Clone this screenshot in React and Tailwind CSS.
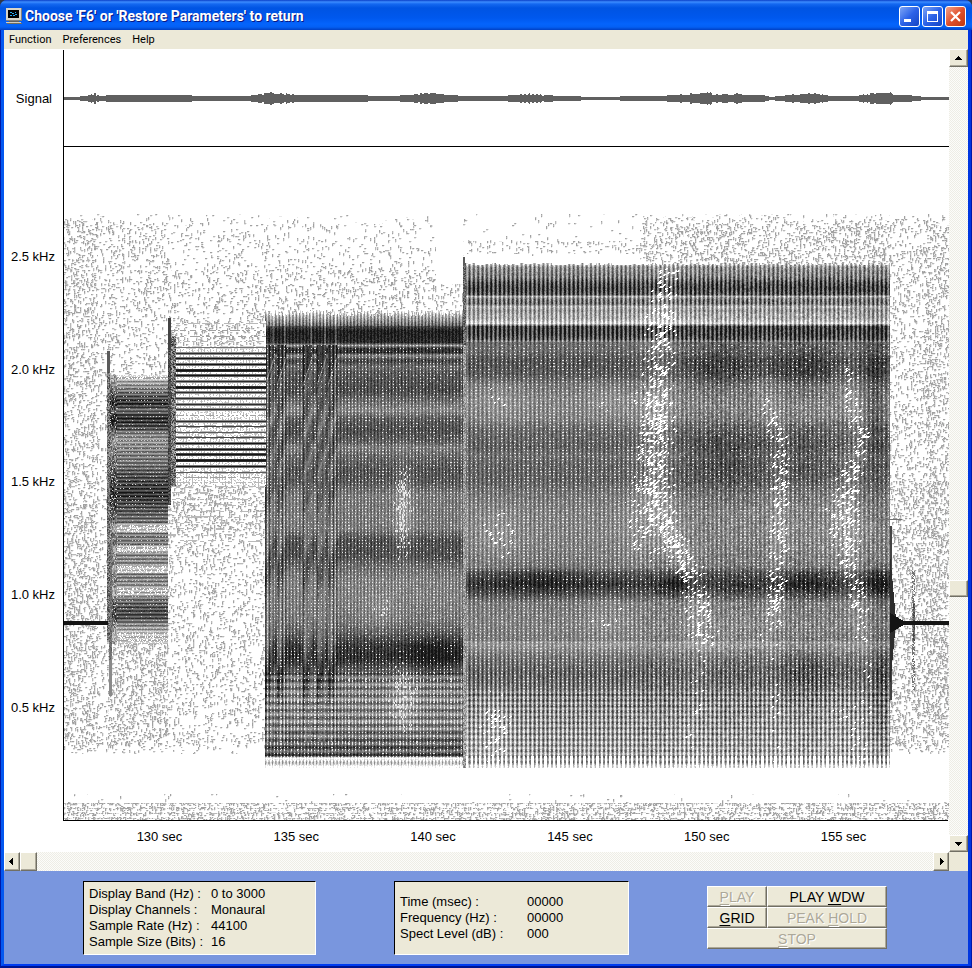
import React, { useMemo, useState } from "react"
import clsx from "clsx"

const frequencies = ["2.5 kHz", "2.0 kHz", "1.5 kHz", "1.0 kHz", "0.5 kHz"]
const times = ["130 sec", "135 sec", "140 sec", "145 sec", "150 sec", "155 sec"]

const displayInfo = [
  ["Display Band (Hz) :", "0 to 3000"],
  ["Display Channels :", "Monaural"],
  ["Sample Rate (Hz) :", "44100"],
  ["Sample Size (Bits) :", "16"],
]

const cursorInfo = [
  ["Time (msec) :", "00000"],
  ["Frequency (Hz) :", "00000"],
  ["Spect Level (dB) :", "000"],
]

const TOP = 50
const LEFT = 63
const RIGHT = 949

// half height of the signal, by x
const signal = [
  [64, 1], [74, 1], [85, 2], [94, 4], [100, 2], [111, 3], [128, 3], [188, 3], [194, 2],
  [245, 2], [256, 3], [270, 5], [285, 4], [295, 3], [345, 3], [390, 2], [410, 3],
  [430, 5], [445, 3], [470, 2], [500, 2], [530, 4], [560, 2], [600, 1], [640, 2], [655, 2],
  [700, 4], [710, 6], [713, 3], [735, 4], [745, 3], [762, 3], [770, 1], [790, 3],
  [805, 4], [818, 4], [830, 2], [855, 2], [868, 4], [890, 6], [893, 3], [908, 3], [915, 2],
  [925, 1], [948, 1],
]

// darkness of each block, by y
const chord = [
  [374, 0.1], [380, 0.4], [392, 0.65], [400, 0.85], [404, 0.9], [410, 0.65], [417, 0.92],
  [428, 0.78], [433, 0.58], [441, 0.5], [447, 0.55], [465, 0.64], [475, 0.78], [495, 0.9],
  [505, 0.78], [522, 0.64], [526, 0.2], [530, 0.15], [533, 0.6], [544, 0.6], [547, 0.15],
  [550, 0.2], [553, 0.55], [564, 0.55], [568, 0.12], [571, 0.15], [574, 0.6], [586, 0.5],
  [589, 0.15], [593, 0.2], [597, 0.6], [606, 0.75], [616, 0.8], [626, 0.5], [634, 0.3], [644, 0.1],
]
const tones = [
  [323, 0.3], [330, 0.35], [336, 0.4], [341, 0.3], [347, 0.6], [353, 0.9], [358, 0.95],
  [364, 0.95], [370, 1.3], [375, 1.1], [381, 0.9], [387, 1.3], [392, 0.9], [398, 0.9],
  [404, 0.9], [409, 0.85], [415, 0.35], [421, 0.9], [426, 0.8], [432, 0.7], [437, 0.75],
  [443, 1], [449, 1.1], [454, 1.2], [460, 1.3], [466, 0.95], [472, 0.7], [477, 0.4], [482, 0.3],
]
const warble = [
  [309, 0.1], [314, 0.4], [322, 0.65], [331, 0.96], [342, 0.9], [345, 0.45], [348, 0.85],
  [352, 0.88], [355, 0.5], [360, 0.8], [366, 0.62], [372, 0.7], [380, 0.73], [390, 0.76],
  [402, 0.6], [410, 0.5], [418, 0.68], [430, 0.75], [441, 0.68], [447, 0.54], [456, 0.64],
  [470, 0.72], [482, 0.7], [494, 0.56], [510, 0.56], [528, 0.56], [540, 0.74], [556, 0.74],
  [566, 0.62], [580, 0.53], [600, 0.53], [620, 0.57], [632, 0.67], [645, 0.84], [658, 0.88],
  [668, 0.72], [682, 0.56], [700, 0.52], [722, 0.52], [738, 0.62], [744, 0.68], [755, 0.72],
  [758, 0.25], [764, 0.4], [768, 0.05],
]
const sweep = [
  [264, 0.5], [267, 0.7], [275, 0.78], [282, 1], [288, 1.08], [294, 1], [296, 0.55],
  [299, 0.85], [303, 0.9], [306, 0.55], [310, 0.68], [314, 0.6], [318, 0.6], [323, 0.4],
  [326, 1.08], [334, 1.08], [339, 0.98], [342, 0.62], [350, 0.62], [360, 0.72], [374, 0.7],
  [384, 0.57], [400, 0.5], [418, 0.52], [428, 0.62], [446, 0.67], [456, 0.6], [464, 0.65],
  [480, 0.66], [492, 0.58], [510, 0.52], [530, 0.51], [550, 0.53], [567, 0.57],
  [572, 0.72], [584, 0.85], [594, 0.72], [602, 0.55], [625, 0.52], [645, 0.56],
  [656, 0.72], [672, 0.85], [684, 0.84], [696, 0.8], [712, 0.74], [735, 0.7], [756, 0.64],
  [764, 0.55], [768, 0.05],
]

// faded streaks running down through the sweep block: points of [y, x], then width and depth
const streaks = [
  { path: [[290, 662], [400, 659], [500, 657], [545, 675], [590, 697], [650, 700], [740, 692]], width: 15, depth: 0.34 },
  { path: [[390, 765], [440, 780], [550, 779], [640, 772], [700, 775]], width: 10, depth: 0.3 },
  { path: [[370, 848], [390, 851], [440, 861], [500, 846], [560, 850], [620, 860], [680, 870], [730, 862]], width: 11, depth: 0.3 },
]
const glows = [
  [403, 510, 9, 48, 0.35], [403, 700, 14, 34, 0.3], [380, 610, 18, 22, 0.14],
  [500, 400, 26, 26, 0.14], [498, 535, 22, 26, 0.2], [495, 730, 18, 40, 0.28],
  [610, 400, 24, 22, 0.12], [608, 620, 28, 26, 0.15], [645, 520, 26, 50, 0.2],
  [725, 630, 38, 20, 0.12], [838, 520, 24, 45, 0.18], [668, 275, 12, 25, 0.2],
  [650, 435, 14, 70, 0.16], [840, 720, 20, 40, 0.14],
]
const shadows = [
  [720, 365, 30, 30, 0.1], [805, 365, 28, 28, 0.12], [725, 455, 38, 34, 0.12],
  [800, 455, 30, 28, 0.08], [875, 400, 12, 80, 0.16], [675, 583, 12, 12, 0.16],
  [432, 655, 28, 20, 0.12], [540, 580, 36, 14, 0.1], [805, 670, 24, 24, 0.1],
  [880, 680, 10, 80, 0.14], [805, 583, 24, 14, 0.1], [880, 583, 14, 14, 0.14],
]

// columns where the warble jumps in pitch
const jumps = [265, 277, 303, 317, 328]

function at(points, v) {
  if (v <= points[0][0]) return points[0][1]
  for (let i = 1; i < points.length; i++) {
    const [b, fb] = points[i]
    if (v <= b) {
      const [a, fa] = points[i - 1]
      return fa + ((fb - fa) * (v - a)) / (b - a)
    }
  }
  return points[points.length - 1][1]
}

function noise(x, y) {
  let h = Math.imul(x, 374761393) + Math.imul(y, 668265263)
  h = Math.imul(h ^ (h >>> 13), 1274126177)
  h = Math.imul(h ^ (h >>> 15), 2246822519)
  return ((h ^ (h >>> 16)) >>> 0) / 4294967296
}

const blob = (x, y, [cx, cy, rx, ry, depth]) =>
  depth * Math.exp(-(((x - cx) / rx) ** 2) - ((y - cy) / ry) ** 2)

// how many specks the background holds at a point
function dust(x, y) {
  if (y >= 803) return y % 5 === 1 ? 0.12 : y % 5 === 3 ? 0.6 : 0.26
  if (y > 793) return 0.01
  if (y < 214 || y > 753) return 0
  const edge = Math.min(1, (y - 212) / 14, (755 - y) / 14)
  if (x < 98) return edge * (y > 500 ? 0.29 : 0.23)
  if (x < 108) return edge * 0.11
  if (x < 168) return edge * (y < 380 ? 0.13 : 0.29)
  if (x < 265) return edge * (y < 270 ? 0.07 : y < 320 ? 0.14 : y < 345 ? 0.22 : y > 480 && y < 530 ? 0.22 : 0.15)
  if (x < 436) return edge * (y < 270 ? 0.07 : 0.14)
  if (x < 463) return y > 283 ? 0.12 : 0
  if (x < 640) return y > 240 && y < 254 ? 0.1 : y < 256 ? 0.02 : 0
  if (x < 890) return edge * (0.19 + blob(x, y, [705, 232, 26, 30, 0.14]) + blob(x, y, [870, 235, 30, 30, 0.14]))
  return edge * (0.16 + (y > 480 ? 0.1 : 0) + (x > 925 ? 0.1 : 0))
}

function isSpeck(x, y, d) {
  const tall = noise(x, Math.floor((y + noise(x, 1) * 3) / 3))
  const wide = noise(Math.floor((x + noise(3, y) * 2) / 2) + 911, y + 77)
  return tall < d * 0.6 || wide < d * 0.5
}

function speck(x, y) {
  const d = dust(x, y)
  if (!d) return 0
  if (isSpeck(x, y, d)) return 0.27 + noise(x, y) * 0.15
  return isSpeck(x - 1, y, d) || isSpeck(x, y - 1, d) ? 0.1 : 0
}

function darkness(x, y) {
  const r = noise(x, y)

  // steady tone before and after
  if (y >= 621 && y <= 624 && (x < 108 || x > 897)) return 0.95
  if (x >= 890 && x < 903) {
    const reach = (903 - x) * 0.6
    if (Math.abs(y - 622.5) < 2 + reach) return 0.95
    if (x < 896 && Math.abs(y - 620) < 62 - (x - 890) * 11) return 0.85
    if (x < 892 && y > 525 && y < 700) return 0.75
  }
  if (x >= 912 && x <= 914 && y > 570 && y < 690 && r < 0.5) return 0.55
  if (x >= 913 && x <= 914 && y > 603 && y < 641) return 0.8
  if (y === 519 && x > 878 && x < 902) return 0.6

  if (x >= 107 && x < 168) {
    if (x < 110 && y > 350 && y < 640) return y < 372 ? 0.7 : 0.35 + r * 0.5
    if (x >= 109 && x < 112 && y > 540 && y < 696) return y < 660 ? 0.7 - r * 0.2 : 0.5
    if (y > 374 && y < 644) {
      const d = at(chord, y)
      if (x < 117) return r < 0.1 ? 0.2 : Math.max(d, 0.4) + 0.2 - noise(x, y >> 1) * 0.4
      const line = Math.cos((y * Math.PI * 2) / 3.7)
      if (d < 0.35) return r < 0.3 ? 0 : 0.3 + 0.15 * line
      const dot = x % 3 === 0 && y % 4 === 0 && r > d * 0.7
      return dot ? 0.15 : d + 0.17 * line - r * 0.08
    }
  }

  if (x >= 168 && x < 266) {
    if (x < 171 && y > 317 && y < 505) return y < 350 ? 0.75 : 0.9 - r * 0.3
    if (x < 176 && y > 335 && y < 486) return 0.9 - r * 0.6
    if (y > 320 && y < 485) {
      let v = 0
      tones.forEach(([ty, s]) => {
        const gap = Math.abs(y - ty)
        if (gap === 0) v = Math.max(v, Math.min(0.95, s))
        if (gap === 1) v = Math.max(v, s - 0.38)
      })
      if (v > 0.45) return v
      if (v > 0.2) return noise(x >> 1, y) < 0.65 ? v : 0
      return y > 345 ? (x % 3 === 0 && r < 0.6 ? 0.28 : r < 0.15 ? 0.2 : 0.02) : speck(x, y)
    }
    if (y >= 485 && y < 545 && y % 6 < 2 && noise(x >> 2, y) < 0.3) return 0.3
  }

  if (x >= 265 && x < 463 && y > 309 + noise(x, 3) * 7 && y < 768) {
    let d = at(warble, y)
    const start = jumps.findLast((j) => x >= j)
    const step = x - start
    if (step < 9) {
      // energy arrives late after each jump, so the bands slide down
      if (y < 345) d -= step > 6 ? 0.2 : 0
      else if (y < 742) d = at(warble, Math.max(350, y - 28 + step * 3)) * 0.85 + 0.1 + (step % 4 < 2 ? 0.1 : -0.1)
    }
    let fade = 0
    glows.forEach((g) => (fade += blob(x, y, g)))
    if (x > 335) shadows.forEach((g) => (d += blob(x, y, g)))
    const stripe = Math.cos((x * Math.PI * 2) / 3.4)
    const low = y > 672
    if (y < 326) d += 0.1 - 0.22 * (1 - stripe)
    else if (y < 345) d += 0.1 * stripe
    else if (y > 756) d -= 0.25 * (1 - stripe)
    else d += 0.12 * stripe
    d += (r - 0.5) * 0.14 - fade * 0.45
    if (low) d += 0.15 * Math.cos(((y - 747) * Math.PI * 2) / 7.4)
    if (y > 342 && stripe < -0.4 && (y % 3 === 0 || (low && y % 7 < 2)) && r > d * 0.85) return 0.06
    if (noise(x, y >> 1) < fade * 1.1 - 0.08) return 0.05
    return d
  }

  if (x >= 463 && x < 890 && y > 265 - noise(x >> 2, 9) * 3 && y < 768) {
    if (x < 466) return y < 345 ? 0.85 - r * 0.4 : 0.62 - r * 0.4
    let d = at(sweep, y)
    let fade = 0
    glows.forEach((g) => (fade += blob(x, y, g)))
    shadows.forEach((g) => (d += blob(x, y, g)))
    streaks.forEach((s) => {
      const off = (x - at(s.path, y)) / s.width
      const start = Math.min(1, Math.max(0, (y - s.path[0][0] + 30) / 60))
      const end = Math.min(1, Math.max(0.4, (700 - y) / 100))
      if (Math.abs(off) < 3) fade += s.depth * Math.exp(-off * off) * start * end
    })
    fade = Math.min(0.48, fade)
    if (x > 640) d += (noise(x >> 1, y >> 1) - 0.5) * 0.14
    const stripe = Math.cos(((x - 469) * Math.PI * 2) / 4.34)
    if (y < 342) d -= (d > 0.8 ? 0.3 : 0.24) * (1 - stripe)
    else if (y > 640) d -= Math.min(0.28, 0.1 + (y - 640) * 0.003) * (1 - stripe)
    else d += 0.12 * stripe
    d += (r - 0.5) * 0.14 - fade * 0.35
    if (y > 690) d += 0.12 * Math.cos((y * Math.PI * 2) / 5.6)
    if (y > 755 && stripe < 0) return 0
    if (y > 342 && stripe < -0.45 && y % 3 === 0 && r > d * 0.9) return 0.06
    if (noise((x + (y & 1)) >> 1, y >> 1) < fade * 0.95 - 0.08) return 0.03
    return d
  }
  if (x >= 463 && x < 465 && y > 256 && y < 268) return 0.7

  return speck(x, y)
}

const LEVELS = 10
const TILE = 64

// one path for each shade in each tile, built from horizontal runs
function buildSpectrogram() {
  const paths = []
  for (let tx = LEFT + 1; tx < RIGHT; tx += TILE) {
    for (let ty = 210; ty < 820; ty += TILE) {
      const runs = Array.from({ length: LEVELS + 1 }, () => [])
      const endX = Math.min(tx + TILE, RIGHT)
      const endY = Math.min(ty + TILE, 820)
      for (let y = ty; y < endY; y++) {
        let start = tx
        let last = -1
        for (let x = tx; x <= endX; x++) {
          const v = x < endX ? Math.round(Math.max(0, Math.min(0.99, darkness(x, y))) * LEVELS) : -1
          if (v !== last) {
            if (last > 0) runs[last].push(`M${start} ${y}h${x - start}v1h${start - x}z`)
            start = x
            last = v
          }
        }
      }
      runs.forEach((list, level) => {
        if (!list.length) return
        const g = Math.round(255 - level * 23.5)
        paths.push({ key: `${tx}-${ty}-${level}`, d: list.join(""), fill: `rgb(${g},${g},${g})` })
      })
    }
  }
  return paths
}

function buildSignal() {
  let d = ""
  for (let x = LEFT + 1; x < RIGHT; x++) {
    const base = at(signal, x)
    const h = Math.max(1, Math.round(base + (base > 3.1 ? (noise(x >> 1, 5) - 0.5) * 2 : 0)))
    d += `M${x} ${98 - h}h1v${h * 2 + 1}h-1z`
  }
  return d
}

function Plot() {
  const cells = useMemo(buildSpectrogram, [])
  const wave = useMemo(buildSignal, [])

  return (
    <svg
      viewBox={`${LEFT} ${TOP} 886 771`}
      className="block w-full"
      shapeRendering="crispEdges"
      role="img"
      aria-label="Signal and spectrogram"
    >
      <path d={wave} fill="#606060" />
      {cells.map((c) => (
        <path key={c.key} d={c.d} fill={c.fill} />
      ))}
      <path d="M63 50h1v771h-1z M63 146h886v1h-886z M63 820h885v1h-885z" fill="#000" />
    </svg>
  )
}

const raised =
  "bg-[#ece9d8] border border-t-white border-l-white border-r-[#716f64] border-b-[#716f64] shadow-[inset_-1px_-1px_0_#aca899]"
const track = "bg-[repeating-conic-gradient(#fcfcfa_0_25%,#eeede5_0_50%)] bg-[length:2px_2px]"

function Arrow({ label, points, className }) {
  return (
    <button aria-label={label} className={clsx("flex shrink-0 items-center justify-center", raised, className)}>
      <svg width="8" height="8" viewBox="0 0 8 8" shapeRendering="crispEdges">
        <path d={points} fill="#000" />
      </svg>
    </button>
  )
}

function InfoBox({ rows, className, labelClass }) {
  return (
    <div
      className={clsx(
        "flex h-[74px] items-center border border-t-black border-l-black border-r-white border-b-white bg-[#ece9d8] pl-[5px]",
        className
      )}
    >
      <table className="text-[13px] leading-4">
        <tbody>
          {rows.map(([name, value]) => (
            <tr key={name}>
              <th scope="row" className={clsx("p-0 text-left font-normal whitespace-nowrap", labelClass)}>
                {name}
              </th>
              <td className="p-0">{value}</td>
            </tr>
          ))}
        </tbody>
      </table>
    </div>
  )
}

function PanelButton({ before, hot, after, disabled, className }) {
  return (
    <button
      disabled={disabled}
      className={clsx(
        "flex h-[21px] items-center justify-center text-[14px] leading-4",
        raised,
        disabled ? "text-[#aca899] [text-shadow:1px_1px_0_#fff]" : "text-black",
        className
      )}
    >
      <span>
        {before}
        <span className="underline underline-offset-2">{hot}</span>
        {after}
      </span>
    </button>
  )
}

function CaptionButton({ label, close, children }) {
  return (
    <button
      aria-label={label}
      className={clsx(
        "flex size-[21px] items-center justify-center rounded-[3px] border border-white",
        close
          ? "bg-linear-to-br from-[#f0a088] via-[#e0502c] to-[#c03810]"
          : "bg-linear-to-br from-[#7fa4f5] via-[#2c62e8] to-[#1646c4]"
      )}
    >
      <svg width="19" height="19" viewBox="0 0 19 19">
        {children}
      </svg>
    </button>
  )
}

function TitleBar() {
  return (
    <header className="flex h-[30px] items-center rounded-t-[7px] bg-[linear-gradient(#0a3fc8_0px,#3c8cff_2px,#1468f0_4px,#0054e3_8px,#0058ee_18px,#0464fc_24px,#0460f4_27px,#0040c4_30px)] pt-[2px] pr-[6px] pl-[6px]">
      <svg width="16" height="16" viewBox="0 0 16 16" shapeRendering="crispEdges">
        <path d="M0 0h16v13h-16z" fill="#808080" />
        <path d="M0 0h15v12h-15z" fill="#d8d4c8" />
        <path d="M2 2h11v8h-11z" fill="#000" />
        <path d="M4 4h2v1h-2z M6 5h2v1h-2z M9 4h1v1h-1z M4 7h2v1h-2z M7 7h2v1h-2z M9 6h2v1h-2z" fill="#28a8f0" />
        <path d="M3 13h10v1h-10z" fill="#606060" />
        <path d="M0 14h15v1h-15z" fill="#d0ccc0" />
        <path d="M1 15h15v1h-15z" fill="#706c60" />
      </svg>
      <h1 className="ml-[3px] flex-1 font-[Roboto,sans-serif] text-[14px] leading-4 font-bold whitespace-nowrap text-white [text-shadow:1px_1px_0_#0a1883]">
        Choose 'F6' or 'Restore Parameters' to return
      </h1>
      <div className="flex gap-[2px]">
        <CaptionButton label="Minimize">
          <path d="M4 12h7v3h-7z" fill="#fff" />
        </CaptionButton>
        <CaptionButton label="Maximize">
          <path d="M4 4h11v11h-11z M5 7v7h9v-7z" fill="#fff" fillRule="evenodd" />
        </CaptionButton>
        <CaptionButton label="Close" close>
          <path d="M5 5l9 9M14 5l-9 9" stroke="#fff" strokeWidth="2.2" />
        </CaptionButton>
      </div>
    </header>
  )
}

function App() {
  const [time, setTime] = useState(0)
  const [level, setLevel] = useState(683)

  return (
    <div className="bg-[#303848] font-['Liberation_Sans',Arial,sans-serif] text-black">
      <div className="flex min-h-screen flex-col rounded-t-[7px] bg-[#0046e0]">
        <TitleBar />

        <div className="flex flex-1 border-x border-b-2 border-x-[#0019a8] border-b-[#001590]">
          <div className="flex min-w-0 flex-1 flex-col border-x-3 border-b-2 border-r-[#0036e0] border-b-[#003cf0] border-l-[#0458f0] bg-[#7996de]">
            <nav className="flex h-[19px] items-center gap-[11px] bg-[#ece9d8] pl-[5px] font-[Roboto,sans-serif] text-[11px] leading-4">
              <button>Function</button>
              <button>Preferences</button>
              <button>Help</button>
            </nav>

            <div className="flex bg-white">
              <main className="min-w-0 flex-1 pt-px text-[13px] leading-4">
                <div className="flex">
                  <div className="flex w-[59px] shrink-0 flex-col">
                    <div className="flex h-[97px] items-center justify-end pr-[11px]">Signal</div>
                    <div className="flex flex-1 flex-col pt-[54px] pb-[57px]">
                      {frequencies.map((f) => (
                        <div key={f} className="flex flex-1 items-center justify-end pr-2">
                          {f}
                        </div>
                      ))}
                    </div>
                  </div>
                  <div className="min-w-0 flex-1">
                    <Plot />
                  </div>
                </div>
                <div className="ml-[59px] flex h-[31px] items-center pr-[37px] pl-7">
                  {times.map((t) => (
                    <div key={t} className="flex-1 text-center">
                      {t}
                    </div>
                  ))}
                </div>
              </main>

              <div className={clsx("flex w-[19px] shrink-0 flex-col", track)}>
                <Arrow label="Scroll up" className="h-[18px] w-full" points="M3 2h1v1h1v1h1v1h1v1h-7v-1h1v-1h1v-1h1z" />
                <input
                  type="range"
                  aria-label="Frequency scroll"
                  min="0"
                  max="1000"
                  value={level}
                  onChange={(e) => setLevel(Number(e.target.value))}
                  className="m-0 min-h-0 w-full flex-1 appearance-none bg-transparent [writing-mode:vertical-lr] [&::-webkit-slider-thumb]:h-[17px] [&::-webkit-slider-thumb]:w-[19px] [&::-webkit-slider-thumb]:appearance-none [&::-webkit-slider-thumb]:border [&::-webkit-slider-thumb]:border-t-white [&::-webkit-slider-thumb]:border-r-[#716f64] [&::-webkit-slider-thumb]:border-b-[#716f64] [&::-webkit-slider-thumb]:border-l-white [&::-webkit-slider-thumb]:bg-[#ece9d8] [&::-webkit-slider-thumb]:shadow-[inset_-1px_-1px_0_#aca899]"
                />
                <Arrow label="Scroll down" className="h-[17px] w-full" points="M0 2h7v1h-1v1h-1v1h-1v1h-1v-1h-1v-1h-1v-1h-1z" />
              </div>
            </div>

            <div className="flex h-[19px] bg-[#ece9d8] pr-[19px]">
              <div className={clsx("flex min-w-0 flex-1", track)}>
                <Arrow label="Scroll left" className="h-full w-4" points="M5 0v7h-1v-1h-1v-1h-1v-1h-1v-1h1v-1h1v-1h1v-1z" />
                <input
                  type="range"
                  aria-label="Time scroll"
                  min="0"
                  max="1000"
                  value={time}
                  onChange={(e) => setTime(Number(e.target.value))}
                  className="m-0 h-full min-w-0 flex-1 appearance-none bg-transparent [&::-webkit-slider-thumb]:h-[19px] [&::-webkit-slider-thumb]:w-[17px] [&::-webkit-slider-thumb]:appearance-none [&::-webkit-slider-thumb]:border [&::-webkit-slider-thumb]:border-t-white [&::-webkit-slider-thumb]:border-r-[#716f64] [&::-webkit-slider-thumb]:border-b-[#716f64] [&::-webkit-slider-thumb]:border-l-white [&::-webkit-slider-thumb]:bg-[#ece9d8] [&::-webkit-slider-thumb]:shadow-[inset_-1px_-1px_0_#aca899]"
                />
                <Arrow label="Scroll right" className="h-full w-4" points="M3 0v7h1v-1h1v-1h1v-1h1v-1h-1v-1h-1v-1h-1v-1z" />
              </div>
            </div>

            <footer className="flex items-start justify-between pt-[10px] pr-[81px] pb-[9px] pl-[79px]">
              <InfoBox rows={displayInfo} className="w-[233px]" labelClass="w-[122px]" />
              <InfoBox rows={cursorInfo} className="w-[235px]" labelClass="w-[127px]" />
              <div className="mt-[5px] grid w-[180px] grid-cols-3">
                <PanelButton hot="P" after="LAY" disabled />
                <PanelButton before="PLAY " hot="W" after="DW" className="col-span-2" />
                <PanelButton hot="G" after="RID" />
                <PanelButton before="PEAK " hot="H" after="OLD" disabled className="col-span-2" />
                <PanelButton hot="S" after="TOP" disabled className="col-span-3" />
              </div>
            </footer>
          </div>
        </div>
      </div>
    </div>
  )
}

export default App
